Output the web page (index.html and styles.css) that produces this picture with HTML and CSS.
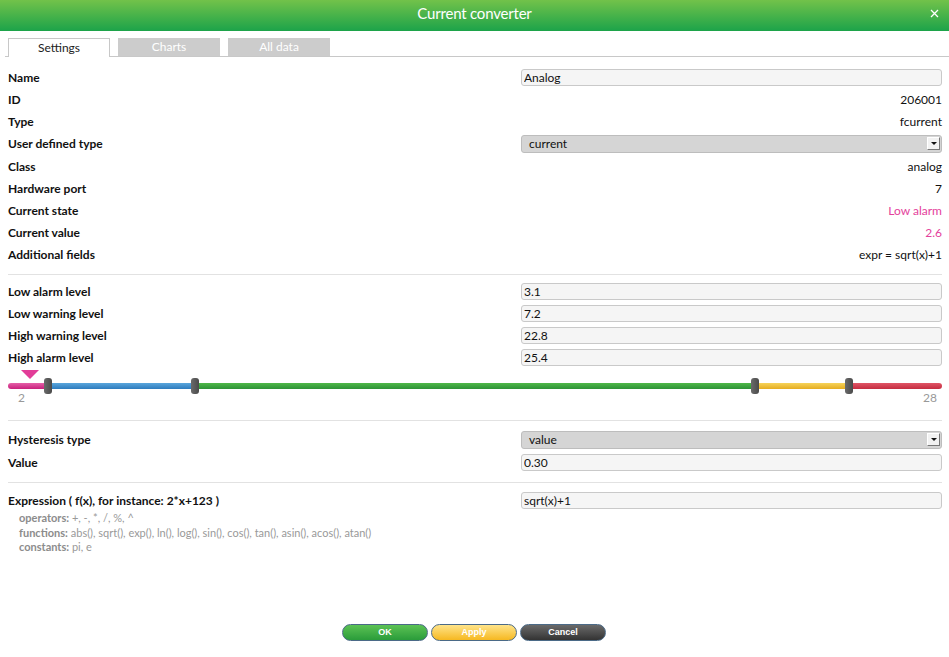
FILE: index.html
```html
<!DOCTYPE html>
<html lang="en">
<head>
    <title>Current converter</title>
    <meta name="viewport" content="width=device-width, initial-scale=1.0">
    <link rel="stylesheet" href="styles.css">
</head>
<body>

    <div class="header">
        <span class="title">Current converter</span>
        <svg class="close" width="9" height="9" viewBox="0 0 9 9">
            <path d="M1 1 L8 8 M8 1 L1 8" stroke="#fff" stroke-width="1.3" fill="none"/>
        </svg>
    </div>

    <div class="tabs">
        <div class="tab active">Settings</div>
        <div class="tab">Charts</div>
        <div class="tab">All data</div>
    </div>

    <div class="section first">
        <div class="row"><span class="label">Name</span><input class="field" type="text" value="Analog"></div>
        <div class="row"><span class="label">ID</span><span class="value">206001</span></div>
        <div class="row"><span class="label">Type</span><span class="value">fcurrent</span></div>
        <div class="row tall"><span class="label">User defined type</span><div class="select"><span>current</span><span class="arrow"></span></div></div>
        <div class="row"><span class="label">Class</span><span class="value">analog</span></div>
        <div class="row"><span class="label">Hardware port</span><span class="value">7</span></div>
        <div class="row"><span class="label">Current state</span><span class="value alarm">Low alarm</span></div>
        <div class="row"><span class="label">Current value</span><span class="value alarm">2.6</span></div>
        <div class="row"><span class="label">Additional fields</span><span class="value">expr = sqrt(x)+1</span></div>
    </div>

    <div class="section levels">
        <div class="row"><span class="label">Low alarm level</span><input class="field" type="text" value="3.1"></div>
        <div class="row"><span class="label">Low warning level</span><input class="field" type="text" value="7.2"></div>
        <div class="row"><span class="label">High warning level</span><input class="field" type="text" value="22.8"></div>
        <div class="row"><span class="label">High alarm level</span><input class="field" type="text" value="25.4"></div>

        <div class="slider">
            <div class="pointer" style="left: 2.31%"></div>
            <div class="track">
                <div class="seg pink" style="width: 4.23%"></div>
                <div class="seg blue" style="width: 15.77%"></div>
                <div class="seg green" style="width: 60%"></div>
                <div class="seg yellow" style="width: 10%"></div>
                <div class="seg red" style="width: 10%"></div>
            </div>
            <div class="handle" style="left: 4.23%"></div>
            <div class="handle" style="left: 20%"></div>
            <div class="handle" style="left: 80%"></div>
            <div class="handle" style="left: 90%"></div>
            <div class="scale"><span>2</span><span>28</span></div>
        </div>
    </div>

    <div class="section hysteresis">
        <div class="row tall"><span class="label">Hysteresis type</span><div class="select"><span>value</span><span class="arrow"></span></div></div>
        <div class="row"><span class="label">Value</span><input class="field" type="text" value="0.30"></div>
    </div>

    <div class="section last">
        <div class="row"><span class="label">Expression ( f(x), for instance: 2*x+123 )</span><input class="field" type="text" value="sqrt(x)+1"></div>
        <div class="help">
            <p><b>operators:</b> +, -, *, /, %, ^</p>
            <p><b>functions:</b> abs(), sqrt(), exp(), ln(), log(), sin(), cos(), tan(), asin(), acos(), atan()</p>
            <p><b>constants:</b> pi, e</p>
        </div>
    </div>

    <div class="buttons">
        <button class="btn ok">OK</button>
        <button class="btn apply">Apply</button>
        <button class="btn cancel">Cancel</button>
    </div>

</body>
</html>
```

FILE: styles.css
```css
body {
    margin: 0;
    width: 949px;
    height: 657px;
    background: #fff;
    font-family: Lato, "Open Sans", sans-serif;
    font-size: 12px;
    color: #111;
    overflow: hidden;
}

.header {
    height: 31px;
    box-sizing: border-box;
    padding-bottom: 5px;
    background: linear-gradient(#72c24a, #1ca34a);
    display: flex;
    align-items: center;
    justify-content: center;
    position: relative;
}

.title {
    color: #fff;
    font-size: 15px;
    letter-spacing: -0.2px;
}

.close {
    position: absolute;
    right: 10px;
    top: 9px;
}

.tabs {
    display: flex;
    gap: 8px;
    margin: 7px 0 0 5px;
    padding-left: 3px;
    border-bottom: 1px solid #c8c8c8;
    height: 18px;
}

.tab {
    width: 102px;
    height: 18px;
    line-height: 17px;
    text-align: center;
    background: #cccccc;
    color: #fff;
    font-size: 12px;
}

.tab.active {
    background: #fff;
    color: #222;
    border: 1px solid #c8c8c8;
    border-bottom: none;
    height: 18px;
    margin-bottom: -1px;
    width: 100px;
}

.section {
    margin: 0 7px 0 8px;
    border-bottom: 1px solid #e2e2e2;
}

.section.first {
    padding: 9px 0 9px;
}

.section.levels {
    padding: 5px 0 7px;
}

.section.hysteresis {
    padding: 7px 0 9px;
}

.section.last {
    padding: 6px 0 0;
    border-bottom: none;
}

.row {
    display: grid;
    grid-template-columns: 513px 1fr;
    align-items: center;
    height: 22px;
}

.row.tall {
    height: 23px;
}

.label {
    font-weight: bold;
    white-space: nowrap;
}

.value {
    text-align: right;
}

.value.alarm {
    color: #e4419c;
}

.field {
    height: 17px;
    box-sizing: border-box;
    border: 1px solid #c9c9c9;
    border-radius: 3px;
    background: #f5f5f5;
    font-family: Lato, "Open Sans", sans-serif;
    font-size: 12px;
    color: #111;
    padding: 0 2px;
    margin: 0;
    width: 100%;
}

.select {
    height: 18px;
    box-sizing: border-box;
    border: 1px solid #bdbdbd;
    border-radius: 3px;
    background: #d5d5d5;
    display: flex;
    align-items: center;
    justify-content: space-between;
    padding: 0 1px 0 7px;
}

.arrow {
    width: 13px;
    height: 13px;
    box-sizing: border-box;
    background: #f2f2f2;
    border: 1px solid #fff;
    border-right-color: #777;
    border-bottom-color: #777;
    position: relative;
}

.arrow::after {
    content: "";
    position: absolute;
    left: 3px;
    top: 4px;
    border-left: 3px solid transparent;
    border-right: 3px solid transparent;
    border-top: 3px solid #111;
}

.slider {
    position: relative;
    height: 45px;
}

.pointer {
    position: absolute;
    top: 2px;
    width: 0;
    height: 0;
    margin-left: -9px;
    border-left: 9px solid transparent;
    border-right: 9px solid transparent;
    border-top: 9px solid #e23d98;
}

.track {
    position: absolute;
    left: 0;
    right: 0;
    top: 15px;
    height: 6px;
    border-radius: 3px;
    overflow: hidden;
    display: flex;
}

.seg {
    height: 6px;
}

.pink { background: linear-gradient(#e560a8, #c8207c); }
.blue { background: linear-gradient(#5aa6dc, #2d7bbd); }
.green { background: linear-gradient(#4fb848, #2e9236); }
.yellow { background: linear-gradient(#f6d35a, #e5ac20); }
.red { background: linear-gradient(#e05566, #c42c40); }

.handle {
    position: absolute;
    top: 10px;
    width: 8px;
    height: 16px;
    margin-left: -4px;
    border-radius: 3px;
    background: linear-gradient(90deg, #6a6a6a, #4a4a4a);
}

.scale {
    position: absolute;
    top: 22px;
    left: 10px;
    right: 5px;
    display: flex;
    justify-content: space-between;
    color: #999;
    font-size: 12px;
}

.help {
    padding-left: 11px;
    color: #999;
    font-size: 11px;
}

.help p {
    margin: 0;
    line-height: 14.5px;
}

.help b {
    color: #8c8c8c;
}

.buttons {
    display: flex;
    justify-content: center;
    gap: 3px;
    margin-top: 69px;
    padding-right: 1px;
}

.btn {
    width: 86px;
    height: 17px;
    border: 1px solid #4b6a87;
    border-radius: 9px;
    color: #fff;
    font-family: "Liberation Sans", Arial, sans-serif;
    font-weight: bold;
    font-size: 9px;
    padding: 0;
    cursor: pointer;
}

.ok {
    background: linear-gradient(#5cc254, #2a9c3a);
}

.apply {
    background: linear-gradient(#ffe48a, #f6b821);
}

.cancel {
    background: linear-gradient(#6a6a6a, #333);
}
```
